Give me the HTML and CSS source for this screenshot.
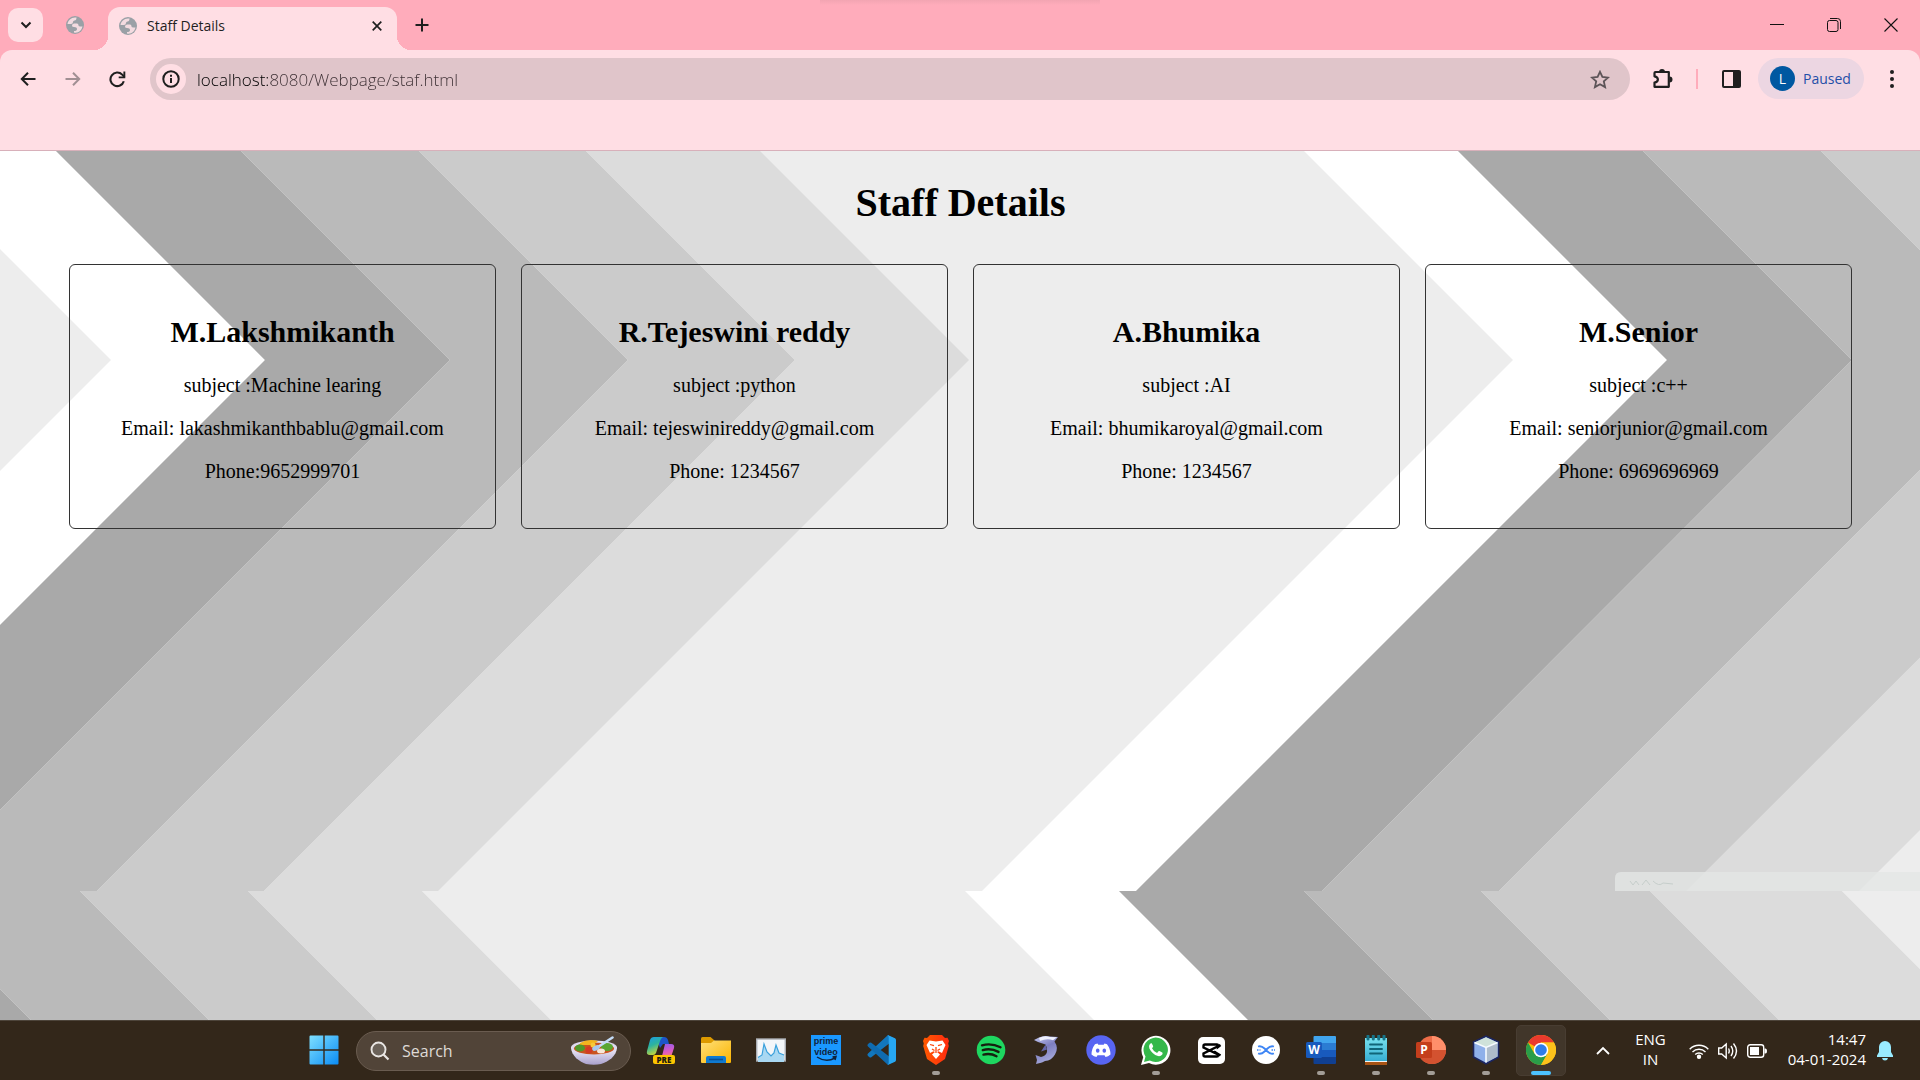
FILE: index.html
```html
<!DOCTYPE html>
<html lang="en">
<head>
<meta charset="utf-8">
<title>Staff Details</title>
<link rel="stylesheet" href="styles.css">
</head>
<body>
<svg class="defs" width="0" height="0" aria-hidden="true">
  <symbol id="globe" viewBox="0 0 20 20">
    <circle cx="10" cy="10" r="9" fill="#9aa0a6"/>
    <path d="M10 2.500C6 2.500 3 5.500 2.500 9H6q2 0 2-2 0-1.500 1.500-1.500 2 0 2-3zM9 8.500h3q1.500 0 1.500 2 0 1 2 1h2q-.8 4-4.500 5.700-2 .8-4 .3V16q3 0 3-2t-3-2q-2 0-2-1.500T9 8.500z" fill="#f3dbe0"/>
  </symbol>
</svg>

<div class="browser">
  <header class="tabstrip">
    <button class="tab-search" aria-label="Search tabs"><svg width="12" height="8" viewBox="0 0 12 8"><path d="M1.500 1.500 6 6l4.500-4.500" fill="none" stroke="#1f1f1f" stroke-width="2"/></svg></button>
    <button class="tab-small" aria-label="Tab"><svg width="20" height="20"><use href="#globe"/></svg></button>
    <div class="tab">
      <svg width="20" height="20"><use href="#globe"/></svg>
      <span class="tab-title">Staff Details</span>
      <button class="plain" aria-label="Close tab"><svg width="10" height="10" viewBox="0 0 10 10"><path d="M.7.7l8.600 8.600M9.300.7.7 9.300" stroke="#1f1f1f" stroke-width="1.700"/></svg></button>
    </div>
    <button class="plain new-tab" aria-label="New tab"><svg width="14" height="14" viewBox="0 0 14 14"><path d="M7 .5v13M.5 7h13" stroke="#1f1f1f" stroke-width="2"/></svg></button>
    <div class="window-buttons">
      <button class="plain" aria-label="Minimize"><svg width="14" height="14" viewBox="0 0 14 14"><path d="M0 6.500h14" stroke="#111"/></svg></button>
      <button class="plain" aria-label="Restore"><svg width="14" height="14" viewBox="0 0 14 14" fill="none" stroke="#111"><rect x=".5" y="2.500" width="10.500" height="11" rx="2"/><path d="M3 .5h7.500a3 3 0 0 1 3 3V11"/></svg></button>
      <button class="plain" aria-label="Close"><svg width="14" height="14" viewBox="0 0 14 14"><path d="M.5.5l13 13M13.500.5l-13 13" stroke="#111" stroke-width="1.100"/></svg></button>
    </div>
  </header>

  <nav class="toolbar">
    <button class="plain nav" aria-label="Back"><svg width="16" height="14" viewBox="0 0 16 14"><path d="M15.500 7H2M8 .8 1.800 7 8 13.200" fill="none" stroke="#1f1f1f" stroke-width="2"/></svg></button>
    <button class="plain nav" aria-label="Forward"><svg width="16" height="14" viewBox="0 0 16 14"><path d="M.5 7H14M8 .8 14.200 7 8 13.200" fill="none" stroke="#a18f93" stroke-width="2"/></svg></button>
    <button class="plain nav" aria-label="Reload"><svg width="17" height="17" viewBox="0 0 17 17"><path d="M14.800 10.200A6.800 6.800 0 1 1 13.200 3.600L15.500 6" fill="none" stroke="#1f1f1f" stroke-width="2.100"/><path d="M16.300.6v6.700H9.700V5.500h4.700V.6z" fill="#1f1f1f"/></svg></button>
    <div class="omnibox">
      <button class="site-info" aria-label="Site information"><svg width="18" height="18" viewBox="0 0 18 18"><circle cx="9" cy="9" r="7.700" fill="none" stroke="#1f1f1f" stroke-width="2"/><path d="M9 8v5M9 4.700v2" stroke="#1f1f1f" stroke-width="2"/></svg></button>
      <input class="url" type="text" aria-label="Address" value="localhost:8080/Webpage/staf.html">
      <button class="plain" aria-label="Bookmark"><svg width="20" height="19" viewBox="0 0 20 19"><path d="M10 1.800l2.400 5.200 5.700.6-4.300 3.800 1.300 5.700L10 14.200l-5.100 2.900 1.300-5.700L1.900 7.600 7.600 7z" fill="none" stroke="#5d5458" stroke-width="1.800"/></svg></button>
    </div>
    <button class="plain extensions" aria-label="Extensions"><svg width="22" height="22" viewBox="0 0 22 22"><path d="M3.500 4h13.300v14.800H2.500v-4.300c4.500-.8 4.500-5.400 0-6.200V5a1 1 0 0 1 1-1z" fill="none" stroke="#1f1f1f" stroke-width="2.200" stroke-linejoin="round"/><path d="M7 4a3 3 0 0 1 6 0zM17.500 8.500a3 3 0 0 1 0 6z" fill="#1f1f1f"/></svg></button>
    <span class="divider"></span>
    <button class="plain side-panel" aria-label="Side panel"><svg width="19" height="18" viewBox="0 0 19 18"><rect x="1" y="1" width="17" height="16" rx="1" fill="none" stroke="#1f1f1f" stroke-width="2"/><path d="M11 1h7v16h-7z" fill="#1f1f1f"/></svg></button>
    <button class="profile"><span class="avatar">L</span>Paused</button>
    <button class="plain menu" aria-label="Menu"><svg width="4" height="18" viewBox="0 0 4 18" fill="#1f1f1f"><circle cx="2" cy="2" r="2"/><circle cx="2" cy="9" r="2"/><circle cx="2" cy="16" r="2"/></svg></button>
  </nav>

  <main class="page">
    <svg class="backdrop" viewBox="0 0 1920 869" preserveAspectRatio="xMidYMin slice" aria-hidden="true">
      <rect width="1920" height="869" fill="#ededed"/>
      <path fill="#fff" d="M-98 0 111 209-420 740H-266L265 209 56 0zM1304 0l209 209L982 740h154l531-531L1458 0z"/>
      <path fill="#a9a9a9" d="M56 0 265 209-266 740H-81L450 209 241 0zM1458 0l209 209-531 531h186l530-531L1643 0z"/>
      <path fill="#bababa" d="M241 0 450 209-81 740H97L628 209 419 0zM1643 0l209 209-530 531h177l531-531L1821 0z"/>
      <path fill="#cbcbcb" d="M419 0 628 209 97 740H264L795 209 586 0zM1821 0l209 209-531 531h188l531-531L2009 0z"/>
      <path fill="#dcdcdc" d="M586 0 795 209 264 740H438L969 209 760 0zM2009 0l209 209-532 531h173l531-531z"/>
      <path fill="#e3e6e5" opacity=".8" d="M1615 740v-13q0-6 6-6h299v19z"/>
      <path fill="none" stroke="#c6cecb" d="M1630 730l3 4 3-4 3 4M1642 734l4-5 4 5M1653 730q6 6 10 2l10 1"/>
      <path fill="#a9a9a9" d="M-98 740 31 869H-98z"/>
      <path fill="#bababa" d="M-98 740 31 869H209L80 740z"/>
      <path fill="#cbcbcb" d="M80 740 209 869H377L248 740z"/>
      <path fill="#dcdcdc" d="M248 740 377 869H551L422 740z"/>
      <path fill="#ededed" d="M422 740 551 869h543L965 740z"/>
      <path fill="#fff" d="M965 740l129 129h154L1119 740z"/>
      <path fill="#a9a9a9" d="M1119 740l129 129h185L1304 740z"/>
      <path fill="#bababa" d="M1304 740l129 129h177L1481 740z"/>
      <path fill="#cbcbcb" d="M1481 740l129 129h169L1650 740z"/>
      <path fill="#dcdcdc" d="M1650 740l129 129h192L1842 740z"/>
      <path fill="#ededed" d="M1842 740l129 129V740z"/>
    </svg>
    <h1>Staff Details</h1>
    <div class="cards">
      <section class="card"><h2>M.Lakshmikanth</h2><p>subject :Machine learing</p><p>Email: lakashmikanthbablu@gmail.com</p><p>Phone:9652999701</p></section>
      <section class="card"><h2>R.Tejeswini reddy</h2><p>subject :python</p><p>Email: tejeswinireddy@gmail.com</p><p>Phone: 1234567</p></section>
      <section class="card"><h2>A.Bhumika</h2><p>subject :AI</p><p>Email: bhumikaroyal@gmail.com</p><p>Phone: 1234567</p></section>
      <section class="card"><h2>M.Senior</h2><p>subject :c++</p><p>Email: seniorjunior@gmail.com</p><p>Phone: 6969696969</p></section>
    </div>
  </main>
</div>

<footer class="taskbar">
  <div class="apps">
    <button class="app" aria-label="Start"><svg width="30" height="30" viewBox="0 0 30 30"><defs><linearGradient id="win" x2="1" y2="1"><stop stop-color="#7fe0ff"/><stop offset="1" stop-color="#0a8cf5"/></linearGradient></defs><path fill="url(#win)" d="M1.500.5h12.800v13.800H.5V1.500a1 1 0 0 1 1-1zM15.700.5h12.800a1 1 0 0 1 1 1v12.800H15.700zM.5 15.700h13.800v13.800H1.500a1 1 0 0 1-1-1zM15.700 15.700h13.800v12.800a1 1 0 0 1-1 1H15.700z"/></svg></button>
    <label class="search">
      <svg width="20" height="20" viewBox="0 0 20 20"><circle cx="8.500" cy="8.500" r="7" fill="#6b6259" stroke="#e9e6e3" stroke-width="1.900"/><path d="M13.500 13.500l5 5" stroke="#e9e6e3" stroke-width="2.200"/></svg>
      <input type="search" placeholder="Search" aria-label="Search">
      <svg width="46" height="29" viewBox="0 0 46 29"><defs><linearGradient id="bowl" x2="0" y2="1"><stop stop-color="#f4f2fb"/><stop offset="1" stop-color="#a9a0cd"/></linearGradient></defs><path fill="url(#bowl)" d="M0 11c0 9 9 15 15 17q8 1.500 15 0c7-2 16-8 16-17z"/><ellipse cx="23" cy="11.500" rx="23" ry="7" fill="#dedaf0"/><ellipse cx="23" cy="12.500" rx="20" ry="6" fill="#c9541f"/><path d="M9 7q8-5 18-2l-5 4H9z" fill="#f2b51f"/><ellipse cx="9" cy="12" rx="5" ry="3.500" fill="#4f9a2c"/><ellipse cx="36" cy="11" rx="6" ry="4" fill="#5aa632"/><circle cx="18" cy="14" r="3.500" fill="#d33a25"/><circle cx="22" cy="9" r="2.500" fill="#f7c93b"/><ellipse cx="30" cy="15" rx="4" ry="2.500" fill="#f7e7d6"/><path d="M41.500 1.500 27 11" stroke="#c4dcf7" stroke-width="2.600" stroke-linecap="round"/><ellipse cx="25" cy="12" rx="4" ry="2.500" transform="rotate(-25 25 12)" fill="#a8c8ee"/></svg>
    </label>
    <button class="app" aria-label="Copilot"><svg width="30" height="30" viewBox="0 0 30 30"><defs><linearGradient id="cpa" x2=".4" y2="1"><stop stop-color="#1b9be8"/><stop offset=".5" stop-color="#2bb3a0"/><stop offset="1" stop-color="#c6d63b"/></linearGradient><linearGradient id="cpb" x2=".2" y2="1"><stop stop-color="#8d5bf0"/><stop offset=".6" stop-color="#e05bc0"/><stop offset="1" stop-color="#fb8a5a"/></linearGradient></defs><path fill="#1d55c9" d="M10 2h8q3 0 4 3l1 4h-6l-3 4z"/><path fill="url(#cpa)" d="M8 2h9q-2 1-3 4l-4 12q-1 2-3 2H4q-4 0-3-4L4 5q1-3 4-3z"/><path fill="url(#cpb)" d="M19 9h6q4 0 3 4l-3 9q-1 3-4 3h-9q3-1 4-4z"/><rect x="7" y="20" width="22" height="9" rx="2" fill="#fdc500"/><text x="18" y="27.500" text-anchor="middle" class="pre">PRE</text></svg></button>
    <button class="app" aria-label="File Explorer"><svg width="32" height="28" viewBox="0 0 32 28"><defs><linearGradient id="fold" x2="1" y2="1"><stop stop-color="#ffe07a"/><stop offset="1" stop-color="#fbb400"/></linearGradient></defs><path d="M1 2.500Q1 1 2.500 1h8l4 3.500V10H1z" fill="#dd9a00"/><path d="M1 7h10l3-2.500h17V26a1 1 0 0 1-1 1H2a1 1 0 0 1-1-1z" fill="url(#fold)"/><path d="M6 27v-5q0-2 2-2h16q2 0 2 2v5z" fill="#0f7ad1"/><path d="M9 23.500h14" stroke="#0a4f94" stroke-width="1.600"/></svg></button>
    <button class="app" aria-label="Performance Monitor"><svg width="30" height="24" viewBox="0 0 30 24"><rect x=".7" y="1" width="28.600" height="22" fill="#f3f6f9" stroke="#a9adb3" stroke-width="1.400"/><path d="M2 19.500 6 17l2-11 3 8 4 4 3-3 2-8 3 8 5 2v7H2z" fill="#a9d8f2"/><path d="M2 19.500 6 17l2-11 3 8 4 4 3-3 2-8 3 8 5 2" fill="none" stroke="#3aa0dc" stroke-width="1.200"/></svg></button>
    <button class="app" aria-label="Prime Video"><svg width="30" height="30" viewBox="0 0 30 30"><path fill="#1a98ff" d="M0 0h30v30H0z"/><text x="15" y="9" text-anchor="middle" class="prime">prime</text><text x="15" y="20" text-anchor="middle" class="prime">video</text><path d="M6 22q9 6 18 1M21.500 22l3.500-.5-1 3.500" fill="none" stroke="#10233c" stroke-width="1.500"/></svg></button>
    <button class="app" aria-label="Visual Studio Code"><svg width="30" height="30" viewBox="0 0 30 30"><path d="M22 0 2 18.500q-1.300 1.200 0 2.400l1.500 1.300q.8.600 1.800 0L29 4z" fill="#1277bd"/><path d="M22 30 2 11.500q-1.300-1.200 0-2.400l1.500-1.300q.8-.6 1.800 0L29 26z" fill="#0f6bb0"/><path d="M21.500 0 29 3.200q1 .5 1 1.700v20.200q0 1.200-1 1.700L21.500 30q1.200-1 1.200-2.500v-25Q22.700 1 21.500 0z" fill="#27a7f2"/></svg></button>
    <button class="app open" aria-label="Brave"><svg width="26" height="30" viewBox="0 0 26 30"><defs><linearGradient id="brv"><stop stop-color="#ff5a00"/><stop offset="1" stop-color="#ff2a10"/></linearGradient></defs><path d="M7 0h12l3 3 2.500-.3L26 6l-.8 2.500.6 2.500L22 24l-9 6-9-6L.2 11l.6-2.500L0 6l1.500-3.300L4 3z" fill="url(#brv)"/><path d="M6.500 5.500 13 6.500l6.500-1 3 4.500-2 4.500-1.500 3.500-3.500-1.700L14 17l3 2.500-4 4.500-4-4.500L12 17l-1.500-.7L7 18l-1.500-3.500-2-4.500z" fill="#fff"/><path d="M7 9.500l4 1.200M19 9.500l-4 1.200M13 12v6M9 14l2.500 1.500M17 14l-2.500 1.500" stroke="#ff4308" stroke-width="1.300"/></svg></button>
    <button class="app" aria-label="Spotify"><svg width="30" height="30" viewBox="0 0 30 30"><circle cx="15" cy="15" r="14.300" fill="#1ed760"/><path d="M6 10.300q9.500-2.600 18.500 2M6.800 15.100q8.200-2.200 15.700 1.800M7.500 19.600q7-1.700 13 1.600" fill="none" stroke="#15200f" stroke-width="2.400" stroke-linecap="round"/></svg></button>
    <button class="app" aria-label="Dolphin"><svg width="26" height="30" viewBox="0 0 26 30"><defs><linearGradient id="dol" x2=".4" y2="1"><stop stop-color="#c9cdf4"/><stop offset=".5" stop-color="#7d7ec0"/><stop offset="1" stop-color="#a5a8da"/></linearGradient></defs><path d="M1 5l5-2.500Q11 0 17 1.500l8 .5-3.500 4.500Q26 13 22 19.500q-3.500 6-10 6.500l-3 1.500L3 29l1-4-1.500-5L8 22q5-1 6-5 .8-4-1.500-7.500L5 7z" fill="url(#dol)"/><path d="M6 3q5-2.800 11-1l7 .3-4 3Q14 3 7 6z" fill="#eef0fc"/><path d="M12.500 9.500l-4.500 7 6-2z" fill="#6465a8"/></svg></button>
    <button class="app" aria-label="Discord"><svg width="30" height="30" viewBox="0 0 30 30"><circle cx="15" cy="15" r="14.700" fill="#5865f2"/><path d="M11.500 8.500 9 9.300Q5.500 14 5.500 19.500 8 21.700 10.500 22l1-1.800h7l1 1.800q2.500-.3 5-2.500 0-5.500-3.500-10.200l-2.500-.8-.8 1.200h-5.400z" fill="#fff"/><ellipse cx="11.700" cy="15.700" rx="1.800" ry="2.100" fill="#5865f2"/><ellipse cx="18.300" cy="15.700" rx="1.800" ry="2.100" fill="#5865f2"/></svg></button>
    <button class="app open" aria-label="WhatsApp"><svg width="30" height="30" viewBox="0 0 30 30"><path d="M0 30l2.200-7.800A14.500 14.500 0 1 1 8 28z" fill="#fff"/><path d="M3 27l1.500-5.500A12.200 12.200 0 1 1 8.800 25.500z" fill="#35b84a"/><path d="M10.700 8.200q-.9-.3-1.800.7-1.600 2-.5 4.500 2.600 5.600 8.600 7.600 2.600.6 4.300-1.500.7-1.300 0-1.900l-2.900-1.500q-.7-.2-1.200.5l-1.100 1.300q-3.700-1.400-5.100-4.600l1-1.400q.3-.5 0-1.100z" fill="#fff"/></svg></button>
    <button class="app" aria-label="CapCut"><svg width="27" height="27" viewBox="0 0 27 27"><rect width="27" height="27" rx="5" fill="#fff"/><path d="M22.500 8 20 10V8.500q0-1-1-1H7q-1.500 0-1.500 1.500v1.500L20 17.500v1q0 1-1 1H7q-1.500 0-1.500-1.500v-1.500L22.500 8M16 14.500l6.500 4" fill="none" stroke="#000" stroke-width="2.400"/></svg></button>
    <button class="app" aria-label="Network tool"><svg width="28" height="28" viewBox="0 0 28 28"><circle cx="14" cy="14" r="14" fill="#fff"/><path d="M6 10.500q3.500-1 6.500 2l3 3q3 3 6.500 2M6 17.500q3.500 1 6.500-2l3-3q3-3 6.500-2" fill="none" stroke="#3f86f5" stroke-width="1.800"/><path d="M5 14h3.500M19.500 14H23" stroke="#3f86f5" stroke-width="1.500" stroke-dasharray="1.500 1"/></svg></button>
    <button class="app open" aria-label="Word"><svg width="30" height="28" viewBox="0 0 30 28"><path fill="#41a5ee" d="M7.500 1q0-1 1-1H29q1 0 1 1v6.500H7.500z"/><path fill="#2b7cd3" d="M7.500 7H30v7H7.500z"/><path fill="#185abd" d="M7.500 14H30v7H7.500z"/><path fill="#103f91" d="M7.500 21H30v6q0 1-1 1H8.500q-1 0-1-1z"/><rect y="6" width="16" height="16" rx="1.500" fill="#185abd"/><text x="8" y="18" text-anchor="middle" class="office">W</text></svg></button>
    <button class="app open" aria-label="Notepad"><svg width="24" height="30" viewBox="0 0 24 30"><defs><linearGradient id="note" x2="0" y2="1"><stop stop-color="#77e0ee"/><stop offset="1" stop-color="#37aed3"/></linearGradient></defs><path fill="#a85415" d="M1 25h22v5H1z"/><path fill="#f1f3f4" d="M1 24h22v3H1z"/><path fill="url(#note)" d="M1 3h22v23H1z"/><path d="M6 9.500h12M6 14h12M6 18.500h12" stroke="#106478" stroke-width="1.900" stroke-linecap="round"/><path d="M4 1v3M9.300 1v3M14.700 1v3M20 1v3" stroke="#167489" stroke-width="3" stroke-linecap="round"/></svg></button>
    <button class="app open" aria-label="PowerPoint"><svg width="30" height="28" viewBox="0 0 30 28"><circle cx="16" cy="14" r="14" fill="#ed6c47"/><path d="M16 0a14 14 0 0 1 14 14H16z" fill="#ff8f6b"/><path d="M2 14h28a14 14 0 0 1-28 0z" fill="#d35230"/><rect y="6" width="16" height="16" rx="1.500" fill="#c43e1c"/><text x="8" y="18" text-anchor="middle" class="office">P</text></svg></button>
    <button class="app open" aria-label="NetBeans"><svg width="28" height="30" viewBox="0 0 28 30"><path d="M14 1.200 26.500 7v15L14 28.800 1.500 22V7z" fill="#8fb0ea" stroke="#1b2560" stroke-width="1.600"/><path d="M14 2.200 25.500 7.500 14 12.500 2.500 7.500z" fill="#cfe2da"/><path d="M14 12.500 25.500 7.500v14L14 27.600z" fill="#aebccb"/><path d="M14 12v15.500M2.500 7.500 14 12.500l11.500-5" fill="none" stroke="#f5faff" stroke-width="1.600"/></svg></button>
    <button class="app open active" aria-label="Chrome"><svg width="30" height="30" viewBox="0 0 30 30"><circle cx="15" cy="15" r="15" fill="#fbbc04"/><path d="M15 15 2 7.500A15 15 0 0 1 28 7.500H15z" fill="#ea3a2d"/><path d="M2 7.500A15 15 0 0 0 15 30l6.500-11.200L15 15 8.500 18.700z" fill="#2a9d49"/><path d="M15 7.500h13A15 15 0 0 1 15 30l6.500-11.200z" fill="#fcc21b"/><circle cx="15" cy="15" r="7.300" fill="#fff"/><circle cx="15" cy="15" r="5.800" fill="#2f7de9"/></svg></button>
  </div>
  <div class="tray">
    <button class="plain" aria-label="Hidden icons"><svg width="14" height="9" viewBox="0 0 14 9"><path d="M1 8l6-6 6 6" fill="none" stroke="#fff" stroke-width="1.800"/></svg></button>
    <button class="plain lang">ENG<br>IN</button>
    <button class="plain quick" aria-label="Quick settings">
      <svg width="20" height="16" viewBox="0 0 20 16" fill="none" stroke="#fff" stroke-width="1.400"><path d="M.7 6.200a13 13 0 0 1 18.600 0M3.500 8.900a9.200 9.200 0 0 1 13 0M6.200 11.500a5.400 5.400 0 0 1 7.600 0"/><circle cx="10" cy="13.700" r="1.500" fill="#fff"/></svg>
      <svg width="20" height="18" viewBox="0 0 20 18" fill="none" stroke="#fff" stroke-width="1.400"><path d="M.7 6v6h3l4.500 4V2L3.700 6zM10.500 6.500q1.500 2.500 0 5M13 4q3.500 5 0 10M15.500 1.500q6 7.500 0 15"/></svg>
      <svg width="20" height="14" viewBox="0 0 20 14"><rect x=".7" y=".7" width="16" height="12.600" rx="2.500" fill="none" stroke="#fff" stroke-width="1.400"/><path d="M3 3h9v8H3z" fill="#fff"/><path d="M17.500 4.500h1q1.500 0 1.500 2.500t-1.500 2.500h-1z" fill="#fff"/></svg>
    </button>
    <button class="plain clock">14:47<br>04-01-2024</button>
    <button class="plain" aria-label="Notifications"><svg width="16" height="20" viewBox="0 0 16 20" fill="#99ebff"><path d="M8 0a6 6 0 0 0-6 6v5L0 14.500V16h16v-1.500L14 11V6a6 6 0 0 0-6-6zM5 17h6q-.5 2.500-3 2.500T5 17z"/></svg></button>
  </div>
</footer>
</body>
</html>
```

FILE: styles.css
```css
* { box-sizing: border-box; }

body {
  margin: 0;
  min-height: 100vh;
  display: flex;
  flex-direction: column;
  font-family: "Open Sans", "Noto Sans", sans-serif;
  font-size: 15px;
  color: #1f1f1f;
}

button, input { font: inherit; color: inherit; }
svg { display: block; flex: none; }
.defs { position: absolute; }

.plain {
  display: flex;
  align-items: center;
  justify-content: center;
  padding: 0;
  border: 0;
  background: none;
}

.browser {
  flex: 1;
  display: flex;
  flex-direction: column;
  background: #ffacbb;
}

/* Tab strip */
.tabstrip {
  display: flex;
  align-items: center;
  height: 50px;
  padding: 0 1px 0 8px;
  background: linear-gradient(#f2a5b2, #ffacbb) top center / 280px 5px no-repeat;
}
.tab-search {
  display: flex;
  align-items: center;
  justify-content: center;
  width: 35px;
  height: 34px;
  padding: 0;
  border: 0;
  border-radius: 10px;
  background: #ffdee4;
}
.tab-small {
  width: 65px;
  height: 34px;
  padding: 0 0 0 22px;
  border: 0;
  background: none;
}
.tab {
  position: relative;
  align-self: flex-end;
  display: flex;
  align-items: center;
  gap: 9px;
  width: 289px;
  height: 43px;
  padding: 0 15px 6px 10px;
  border-radius: 12px 12px 0 0;
  background: #ffdee4;
}
.tab::before, .tab::after {
  content: "";
  position: absolute;
  bottom: 0;
  width: 14px;
  height: 14px;
}
.tab::before { right: 100%; background: radial-gradient(circle at 0 0, transparent 14px, #ffdee4 14px); }
.tab::after { left: 100%; background: radial-gradient(circle at 100% 0, transparent 14px, #ffdee4 14px); }
.tab-title { flex: 1; font-size: 14px; }
.new-tab { width: 50px; height: 34px; }
.window-buttons { display: flex; margin-left: auto; }
.window-buttons .plain { width: 57px; height: 48px; }

/* Toolbar */
.toolbar {
  display: flex;
  align-items: flex-start;
  height: 101px;
  padding: 8px 0 0 5px;
  border-bottom: 1px solid #d8b0ba;
  border-radius: 12px 12px 0 0;
  background: #ffdee4;
}
.toolbar > .plain { height: 42px; }
.nav { width: 45px; }
.omnibox {
  flex: 1;
  display: flex;
  align-items: center;
  height: 42px;
  margin-left: 10px;
  padding: 0 20px 0 6px;
  border-radius: 21px;
  background: #e0c5ca;
}
.site-info {
  display: flex;
  align-items: center;
  justify-content: center;
  width: 30px;
  height: 30px;
  padding: 0;
  border: 0;
  border-radius: 50%;
  background: #ffdee4;
}
.url {
  flex: 1;
  min-width: 0;
  height: 30px;
  margin-left: 11px;
  padding: 0;
  border: 0;
  outline: 0;
  background: linear-gradient(90deg, #000 74px, #3d3034 74px);
  background-clip: text;
  color: transparent;
  font-size: 17px;
  font-weight: 300;
}
.extensions { width: 66px; }
.divider { width: 2px; height: 20px; margin-top: 11px; background: #ffacbb; }
.side-panel { width: 54px; margin-left: 6px; }
.profile {
  display: flex;
  align-items: center;
  gap: 8px;
  width: 106px;
  height: 41px;
  padding: 0 0 0 12px;
  border: 0;
  border-radius: 21px;
  background: #ecd6e2;
  color: #1f4fa8;
  font-size: 14px;
}
.avatar {
  width: 25px;
  height: 25px;
  border-radius: 50%;
  background: #0058a1;
  color: #fff;
  font-size: 14px;
  line-height: 25px;
}
.menu { width: 56px; }

/* Staff page */
.page {
  position: relative;
  flex: 1;
  padding: 29px 68px 27px 69px;
  overflow: hidden;
  color: #000;
  font-family: "Liberation Serif", "Times New Roman", serif;
  font-size: 20px;
  line-height: 23px;
  text-align: center;
}
.backdrop {
  position: absolute;
  inset: 0;
  width: 100%;
  height: 100%;
}
.page h1 {
  position: relative;
  margin: 0 0 39px;
  font-size: 40px;
  line-height: 45px;
}
.cards {
  position: relative;
  display: grid;
  grid-template-columns: repeat(4, 1fr);
  gap: 25px;
}
.card {
  padding: 25px;
  border: 1px solid #333;
  border-radius: 6px;
}
.card h2 { margin: 25px 0; font-size: 30px; line-height: 34px; }
.card p { margin: 20px 0; }

/* Taskbar */
.taskbar {
  display: grid;
  grid-template-columns: 11fr auto 13fr;
  height: 60px;
  border-top: 1px solid #4d443a;
  background: #33271a;
  color: #fff;
}
.apps { grid-column: 2; display: flex; align-items: center; }
.app {
  position: relative;
  display: flex;
  align-items: center;
  justify-content: center;
  width: 55px;
  height: 59px;
  padding: 0 1px 1px 0;
  border: 0;
  background: none;
}
.app svg { position: relative; }
.app.open::after {
  content: "";
  position: absolute;
  bottom: 5px;
  left: 50%;
  width: 8px;
  height: 4px;
  margin-left: -5px;
  border-radius: 2px;
  background: #a39d97;
}
.app.active::before {
  content: "";
  position: absolute;
  inset: 4px 3px 4px 2px;
  border: 1px solid #483d32;
  border-radius: 5px;
  background: #41362a;
}
.app.active::after { width: 20px; margin-left: -11px; background: #4cc2ff; }
.search {
  display: flex;
  align-items: center;
  width: 275px;
  height: 40px;
  margin: 0 3px 0 4px;
  padding: 0 13px;
  border: 1px solid #6a5c50;
  border-radius: 20px;
  background: #514438;
}
.search input {
  flex: 1;
  min-width: 0;
  margin-left: 12px;
  padding: 0;
  border: 0;
  outline: 0;
  background: none;
  font-size: 16px;
}
.search input::placeholder { color: #dedad6; opacity: 1; }
.pre { font: 800 8px "Open Sans", sans-serif; fill: #1d1a10; }
.prime { font: 700 9px "Liberation Sans", sans-serif; fill: #10233c; }
.office { font: 700 12px "Open Sans", sans-serif; fill: #fff; }
.tray {
  display: flex;
  align-items: center;
  justify-content: flex-end;
  padding-right: 27px;
  line-height: 20px;
}
.lang, .clock { padding-bottom: 4px; }
.lang { margin: 0 23px 0 25px; }
.quick { gap: 9px; margin-right: 21px; }
.clock { margin-right: 11px; text-align: right; }
```
